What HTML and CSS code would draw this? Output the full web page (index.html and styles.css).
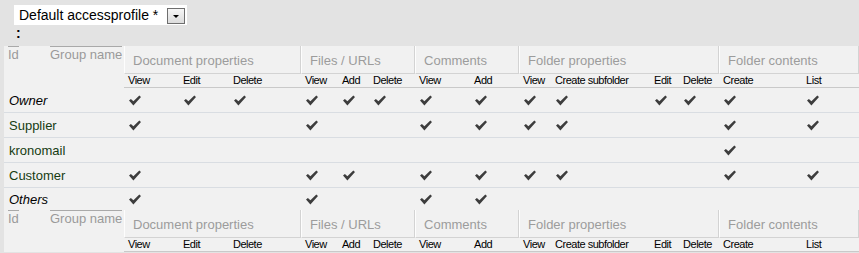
FILE: index.html
```html
<!DOCTYPE html>
<html>
<head>
<meta charset="utf-8">
<title>Access profile</title>
<link rel="stylesheet" href="styles.css">
</head>
<body>
<svg class="defs" width="0" height="0" aria-hidden="true">
  <symbol id="ck" viewBox="0 0 12 11">
    <path d="M0 5.6 L1.9 3.9 L4.4 6.3 L10.3 0.4 L12 2 L4.4 10.6 Z"/>
  </symbol>
</svg>
<div class="top">
  <div class="sel"><span class="sel-text">Default accessprofile *</span><span class="sel-btn"><span class="tri"></span></span></div>
  <div class="colon">:</div>
</div>
<table class="acl">
  <colgroup>
    <col class="w42"><col class="w78">
    <col class="w55"><col class="w50"><col class="w72">
    <col class="w37"><col class="w31"><col class="w46">
    <col class="w55"><col class="w49">
    <col class="w32"><col class="w99"><col class="w29"><col class="w40">
    <col class="w83"><col class="w57">
  </colgroup>
  <thead>
    <tr class="gh">
      <th class="id" rowspan="2"><span>Id</span></th>
      <th class="gn" rowspan="2"><span>Group name</span></th>
      <th class="grp" colspan="3">Document properties</th>
      <th class="grp" colspan="3">Files / URLs</th>
      <th class="grp" colspan="2">Comments</th>
      <th class="grp" colspan="4">Folder properties</th>
      <th class="grp" colspan="2">Folder contents</th>
    </tr>
    <tr class="sh">
      <th>View</th><th>Edit</th><th>Delete</th>
      <th>View</th><th>Add</th><th>Delete</th>
      <th>View</th><th>Add</th>
      <th>View</th><th>Create subfolder</th><th>Edit</th><th>Delete</th>
      <th>Create</th><th>List</th>
    </tr>
  </thead>
  <tbody>
    <tr>
      <td class="name sys" colspan="2">Owner</td>
      <td><svg class="c"><use href="#ck"/></svg></td><td><svg class="c"><use href="#ck"/></svg></td><td><svg class="c"><use href="#ck"/></svg></td>
      <td><svg class="c"><use href="#ck"/></svg></td><td><svg class="c"><use href="#ck"/></svg></td><td><svg class="c"><use href="#ck"/></svg></td>
      <td><svg class="c"><use href="#ck"/></svg></td><td><svg class="c"><use href="#ck"/></svg></td>
      <td><svg class="c"><use href="#ck"/></svg></td><td><svg class="c"><use href="#ck"/></svg></td><td><svg class="c"><use href="#ck"/></svg></td><td><svg class="c"><use href="#ck"/></svg></td>
      <td><svg class="c"><use href="#ck"/></svg></td><td><svg class="c"><use href="#ck"/></svg></td>
    </tr>
    <tr>
      <td class="name" colspan="2">Supplier</td>
      <td><svg class="c"><use href="#ck"/></svg></td><td></td><td></td>
      <td><svg class="c"><use href="#ck"/></svg></td><td></td><td></td>
      <td><svg class="c"><use href="#ck"/></svg></td><td><svg class="c"><use href="#ck"/></svg></td>
      <td><svg class="c"><use href="#ck"/></svg></td><td><svg class="c"><use href="#ck"/></svg></td><td></td><td></td>
      <td><svg class="c"><use href="#ck"/></svg></td><td><svg class="c"><use href="#ck"/></svg></td>
    </tr>
    <tr>
      <td class="name" colspan="2">kronomail</td>
      <td></td><td></td><td></td>
      <td></td><td></td><td></td>
      <td></td><td></td>
      <td></td><td></td><td></td><td></td>
      <td><svg class="c"><use href="#ck"/></svg></td><td></td>
    </tr>
    <tr>
      <td class="name" colspan="2">Customer</td>
      <td><svg class="c"><use href="#ck"/></svg></td><td></td><td></td>
      <td><svg class="c"><use href="#ck"/></svg></td><td><svg class="c"><use href="#ck"/></svg></td><td></td>
      <td><svg class="c"><use href="#ck"/></svg></td><td><svg class="c"><use href="#ck"/></svg></td>
      <td><svg class="c"><use href="#ck"/></svg></td><td><svg class="c"><use href="#ck"/></svg></td><td></td><td></td>
      <td><svg class="c"><use href="#ck"/></svg></td><td><svg class="c"><use href="#ck"/></svg></td>
    </tr>
    <tr class="last">
      <td class="name sys" colspan="2">Others</td>
      <td><svg class="c"><use href="#ck"/></svg></td><td></td><td></td>
      <td><svg class="c"><use href="#ck"/></svg></td><td></td><td></td>
      <td><svg class="c"><use href="#ck"/></svg></td><td><svg class="c"><use href="#ck"/></svg></td>
      <td></td><td></td><td></td><td></td>
      <td></td><td></td>
    </tr>
  </tbody>
  <tfoot>
    <tr class="gh">
      <th class="id" rowspan="2"><span>Id</span></th>
      <th class="gn" rowspan="2"><span>Group name</span></th>
      <th class="grp" colspan="3">Document properties</th>
      <th class="grp" colspan="3">Files / URLs</th>
      <th class="grp" colspan="2">Comments</th>
      <th class="grp" colspan="4">Folder properties</th>
      <th class="grp" colspan="2">Folder contents</th>
    </tr>
    <tr class="sh">
      <th>View</th><th>Edit</th><th>Delete</th>
      <th>View</th><th>Add</th><th>Delete</th>
      <th>View</th><th>Add</th>
      <th>View</th><th>Create subfolder</th><th>Edit</th><th>Delete</th>
      <th>Create</th><th>List</th>
    </tr>
  </tfoot>
</table>
</body>
</html>
```

FILE: styles.css
```css
html, body {
  margin: 0;
  padding: 0;
  background: #e3e3e3;
  font-family: "Liberation Sans", Arial, sans-serif;
}
.defs { position: absolute; width: 0; height: 0; overflow: hidden; }

.top {
  height: 46px;
  box-sizing: border-box;
  padding: 5px 0 0 14px;
}
.sel {
  display: flex;
  align-items: center;
  width: 173px;
  height: 20px;
  background: #fff;
}
.sel-text {
  flex: 1;
  padding-left: 5px;
  font-size: 14px;
  line-height: 16px;
  color: #000;
  white-space: nowrap;
}
.sel-btn {
  width: 16px;
  height: 14px;
  margin-right: 2px;
  margin-top: 2px;
  border: 1px solid #6e6e6e;
  background: linear-gradient(#f6f6f6, #dcdcdc);
  display: flex;
  align-items: center;
  justify-content: center;
}
.tri {
  width: 0;
  height: 0;
  border-left: 3px solid transparent;
  border-right: 3px solid transparent;
  border-top: 3px solid #000;
}
.colon {
  padding-left: 2px;
  font-size: 14px;
  font-weight: bold;
  line-height: 16px;
  color: #000;
}

.acl {
  margin-left: 4px;
  width: 855px;
  table-layout: fixed;
  border-collapse: separate;
  border-spacing: 0;
  background: #f1f1f1;
}
.w42 { width: 42px; } .w78 { width: 78px; }
.w55 { width: 55px; } .w50 { width: 50px; } .w72 { width: 72px; }
.w37 { width: 37px; } .w31 { width: 31px; } .w46 { width: 46px; }
.w49 { width: 49px; } .w32 { width: 32px; } .w99 { width: 99px; }
.w29 { width: 29px; } .w40 { width: 40px; } .w83 { width: 83px; }
.w57 { width: 57px; }

.acl .gh { height: 28px; }
.acl .gh .id, .acl .gh .gn {
  vertical-align: top;
  text-align: left;
  font-weight: normal;
  font-size: 13px;
  line-height: 13px;
  color: #9a9a9a;
  padding: 0 0 0 4px;
}
.acl .gh .id span, .acl .gh .gn span {
  display: inline-block;
  border-top: 1px solid #a9a9a9;
  padding-top: 1px;
  white-space: nowrap;
}
.acl .grp {
  text-align: left;
  font-weight: normal;
  font-size: 13px;
  color: #9c9c9c;
  padding: 1px 0 0 8px;
  border-left: 1px solid #fdfdfd;
  border-right: 1px solid #d3d3d3;
  border-bottom: 1px solid #d3d3d3;
  white-space: nowrap;
  vertical-align: middle;
}
.acl .sh { height: 14px; }
.acl .sh th {
  text-align: left;
  font-weight: normal;
  font-size: 11px;
  line-height: 13px;
  letter-spacing: -0.5px;
  color: #000;
  padding: 0 0 0 4px;
  border-bottom: 1px solid #c9c9c9;
  white-space: nowrap;
  vertical-align: bottom;
}

.acl tbody tr { height: 25px; }
.acl tbody tr.last { height: 22px; }
.acl tbody td {
  border-bottom: 1px solid #d9dde2;
  padding: 0 0 0 5px;
  vertical-align: middle;
}
.acl tbody tr.last td { border-bottom: none; }
.acl .name {
  font-size: 13px;
  color: #163c12;
  white-space: nowrap;
}
.acl .name.sys {
  font-style: italic;
  color: #000;
}
.c {
  display: block;
  width: 12px;
  height: 11px;
  fill: #3d3d3d;
}
```
